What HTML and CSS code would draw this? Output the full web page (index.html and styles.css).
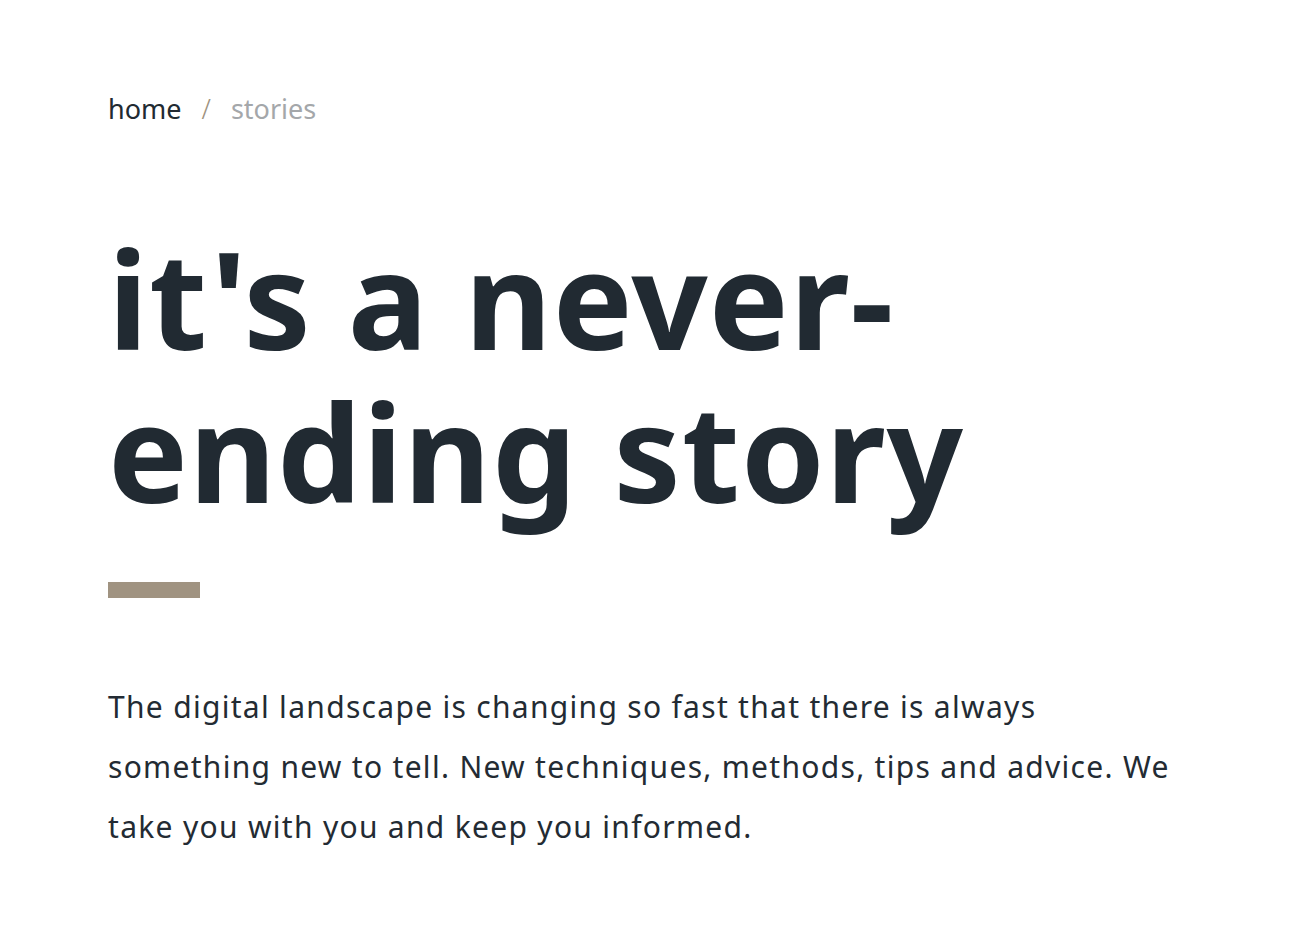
FILE: index.html
```html
<!DOCTYPE html>
<html lang="en">
<head>
<meta charset="utf-8">
<title>Stories</title>
<link rel="stylesheet" href="styles.css">
</head>
<body>
<main class="page">
  <nav class="breadcrumb">
    <a class="crumb" href="#">home</a>
    <span class="sep">/</span>
    <span class="crumb current">stories</span>
  </nav>
  <h1 class="title">it's a never-ending story</h1>
  <div class="rule"></div>
  <p class="intro">The digital landscape is changing so fast that there is always something new to tell. New techniques, methods, tips and advice. We take you with you and keep you informed.</p>
</main>
</body>
</html>
```

FILE: styles.css
```css
html, body {
  margin: 0;
  padding: 0;
  background: #ffffff;
}
body {
  font-family: "Noto Sans", "Lato", sans-serif;
  color: #212a32;
}
.page {
  padding: 89px 108px 0 108px;
}
.breadcrumb {
  display: flex;
  align-items: baseline;
  font-size: 27px;
  line-height: 40px;
  gap: 20px;
}
.crumb {
  color: #212a32;
  text-decoration: none;
}
.crumb.current {
  color: #a4a7aa;
}
.sep {
  color: #9e9280;
  font-weight: 300;
}
.title {
  margin: 93px 0 0 0;
  font-size: 134px;
  line-height: 153px;
  font-weight: 700;
  letter-spacing: 1px;
  color: #212a32;
}
.rule {
  width: 92px;
  height: 16px;
  background: #a09381;
  margin-top: 54px;
}
.intro {
  margin: 79px 0 0 0;
  font-size: 30px;
  line-height: 60px;
  letter-spacing: 1.3px;
  color: #232b33;
}
```
